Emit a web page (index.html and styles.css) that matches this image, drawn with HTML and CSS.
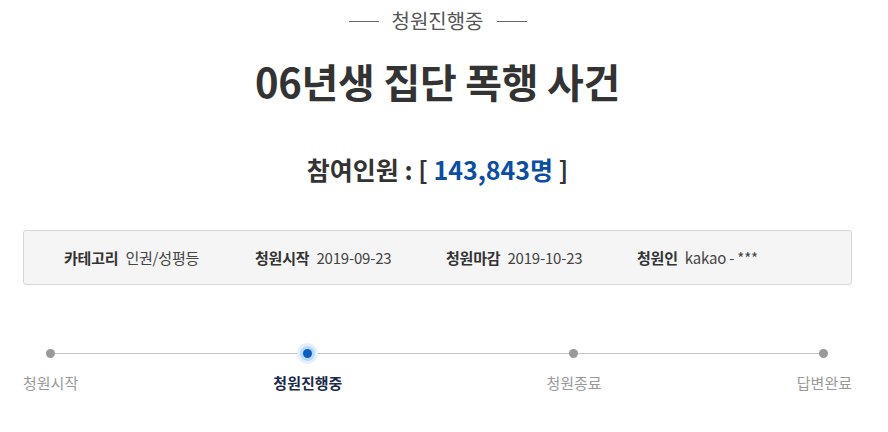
FILE: index.html
```html
<!DOCTYPE html>
<html>
  <head>
    <title>청원진행중 - 06년생 집단 폭행 사건</title>
    <link rel="stylesheet" href="styles.css">
  </head>
  <body>
    <div class="petition">
      <p class="status"><span class="status-text">청원진행중</span></p>
      <h1 class="title">06년생 집단 폭행 사건</h1>
      <h2 class="count">참여인원 : [ <span class="num">143,843명</span> ]</h2>

      <ul class="info">
        <li><strong>카테고리</strong>인권/성평등</li>
        <li><strong>청원시작</strong>2019-09-23</li>
        <li><strong>청원마감</strong>2019-10-23</li>
        <li><strong>청원인</strong>kakao - ***</li>
      </ul>

      <ol class="steps">
        <li class="step">청원시작</li>
        <li class="step on">청원진행중</li>
        <li class="step">청원종료</li>
        <li class="step">답변완료</li>
      </ol>
    </div>
  </body>
</html>
```

FILE: styles.css
```css
body { margin: 0; background: #fff; color: #333; font-family: "Noto Sans CJK KR", "Noto Sans", sans-serif; }
.petition { padding: 0 36px 0 23px; }

.status { margin: 0; padding-top: 7px; display: flex; justify-content: center; align-items: center; gap: 13px; font-size: 20px; line-height: 28px; color: #555; }
.status::before, .status::after { content: ""; width: 30px; height: 1px; background: #666; }

.title { margin: 22px 0 0; text-align: center; font-size: 40px; line-height: 48px; font-weight: 700; color: #333; letter-spacing: -0.3px; }

.count { margin: 48px 0 0; text-align: center; font-size: 25px; line-height: 32px; font-weight: 700; color: #333; }
.count .num { color: #0b4ea2; }

.info { list-style: none; margin: 45px 0 0; padding: 0 0 0 40px; height: 53px; display: flex; align-items: center; background: #f5f5f5; border: 1px solid #d6d6d6; border-radius: 3px; font-size: 15px; color: #444; letter-spacing: -0.2px; }
.info li { width: 191px; white-space: nowrap; }
.info strong { margin-right: 7px; color: #333; }

.steps { list-style: none; margin: 59px 0 0; padding: 0; position: relative; display: flex; justify-content: space-between; font-size: 15px; color: #999; }
.steps::before { content: ""; position: absolute; left: 26px; right: 27px; top: 9px; height: 1px; background: #c4c4c4; }
.step { position: relative; padding-top: 29px; line-height: 20px; display: flex; flex-direction: column; align-items: center; }
.step::before { content: ""; position: absolute; top: 5px; left: 50%; width: 9px; height: 9px; margin-left: -5px; border-radius: 50%; background: #999; }
.step.on { color: #1c2b4a; font-weight: 700; margin-right: 9px; }
.step.on::before { background: #0b5cbf; box-shadow: 0 0 0 3px #b9d9ff, 0 0 0 6px #e3f0ff; }
```
